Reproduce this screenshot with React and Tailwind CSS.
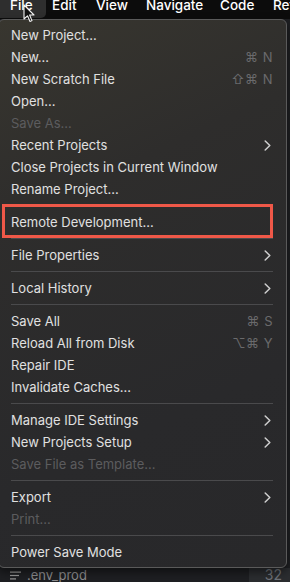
import React from "react";

const F = { fontFamily: '"Inter", "DejaVu Sans", sans-serif' };

function Chevron() {
  return (
    <svg width="7" height="11" viewBox="0 0 7 11" className="block">
      <polyline points="1.2,1 5.8,5.5 1.2,10" fill="none" stroke="#cfcfcf" strokeWidth="1.5" strokeLinecap="round" strokeLinejoin="round" />
    </svg>
  );
}

function Item({ label, shortcut, sub, disabled, children }) {
  return (
    <div className="relative flex h-[22px] items-center pl-[10px] pr-[13px] text-[13px] leading-none">
      <span className={disabled ? "text-[#5c5c5e]" : "text-[#e0e0e0]"}>{label}</span>
      <span className="flex-1" />
      {shortcut && <span className="text-[#6a6a6c] text-[13px] tracking-[0.5px]">{shortcut}</span>}
      {sub && (
        <span className="pr-[2px]">
          <Chevron />
        </span>
      )}
      {children}
    </div>
  );
}

function Sep() {
  return (
    <div className="flex h-[11px] items-center pl-[10px] pr-[13px]">
      <div className="h-px w-full bg-[#4a4a4c]" />
    </div>
  );
}

export default function App() {
  return (
    <div className="relative flex h-[582px] w-[290px] flex-col overflow-hidden bg-[#1e1f22]" style={F}>
      {/* menubar */}
      <div className="flex h-[19px] shrink-0 items-start overflow-hidden whitespace-nowrap bg-[#0c0c0c] text-[13.5px] font-medium leading-none text-white">
        <div className="flex h-[18px] w-[46px] shrink-0 items-start rounded-br-[5px] bg-[#2e2e2e] pl-[10px]">
          <span className="-mt-[1px]">File</span>
        </div>
        <span className="-mt-[1px] ml-[6px] w-[44px] shrink-0">Edit</span>
        <span className="-mt-[1px] w-[50px] shrink-0">View</span>
        <span className="-mt-[1px] w-[74px] shrink-0">Navigate</span>
        <span className="-mt-[1px] w-[53px] shrink-0">Code</span>
        <span className="-mt-[1px] shrink-0">Refactor</span>
      </div>

      {/* menu */}
      <div className="relative -ml-[2px] w-[289px] shrink-0 rounded-[6px] border border-[#5a5a5a] bg-[linear-gradient(155deg,#38362f_0%,#2e2d2c_30%,#29292b_70%,#28282a_100%)] pb-[4px] pt-[4px] shadow-[0_4px_10px_rgba(0,0,0,0.5)]">
        <div className="pl-[2px]">
          <Item label="New Project..." />
          <Item label="New..." shortcut="⌘ N" />
          <Item label="New Scratch File" shortcut="⇧⌘ N" />
          <Item label="Open..." />
          <Item label="Save As..." disabled />
          <Item label="Recent Projects" sub />
          <Item label="Close Projects in Current Window" />
          <Item label="Rename Project..." />
          <Sep />
          <Item label="Remote Development...">
            <div className="absolute -top-[7px] -bottom-[5px] left-[1px] w-[271px] border-[3px] border-[#ef5848]" />
          </Item>
          <Sep />
          <Item label="File Properties" sub />
          <Sep />
          <Item label="Local History" sub />
          <Sep />
          <Item label="Save All" shortcut="⌘ S" />
          <Item label="Reload All from Disk" shortcut="⌥⌘ Y" />
          <Item label="Repair IDE" />
          <Item label="Invalidate Caches..." />
          <Sep />
          <Item label="Manage IDE Settings" sub />
          <Item label="New Projects Setup" sub />
          <Item label="Save File as Template..." disabled />
          <Sep />
          <Item label="Export" sub />
          <Item label="Print..." disabled />
          <Sep />
          <Item label="Power Save Mode" />
        </div>
      </div>

      {/* bottom row */}
      <div className="flex flex-1 items-center text-[13px] leading-none">
        <svg width="12" height="9" viewBox="0 0 12 9" className="ml-[10px] shrink-0">
          <rect x="0" y="0.5" width="11" height="1.2" fill="#9a9a9a" />
          <rect x="0" y="3.9" width="9" height="1.2" fill="#9a9a9a" />
          <rect x="0" y="7.3" width="6" height="1.2" fill="#9a9a9a" />
        </svg>
        <span className="ml-[5px] text-[#8d8d8f]">.env_prod</span>
        <span className="flex-1" />
        <div className="flex h-full w-[41px] items-center justify-end bg-[#2b2d30] pr-[8px] text-[14px] text-[#6f737a]">32</div>
      </div>

      {/* cursor */}
      <svg width="12" height="19" viewBox="0 0 12 19" className="absolute left-[23px] top-[4px]">
        <path d="M1 1 L1 15 L4.5 11.8 L7 17.5 L9 16.6 L6.6 11 L11 11 Z" fill="#111" stroke="#f2f2f2" strokeWidth="1.1" strokeLinejoin="round" />
      </svg>
    </div>
  );
}
